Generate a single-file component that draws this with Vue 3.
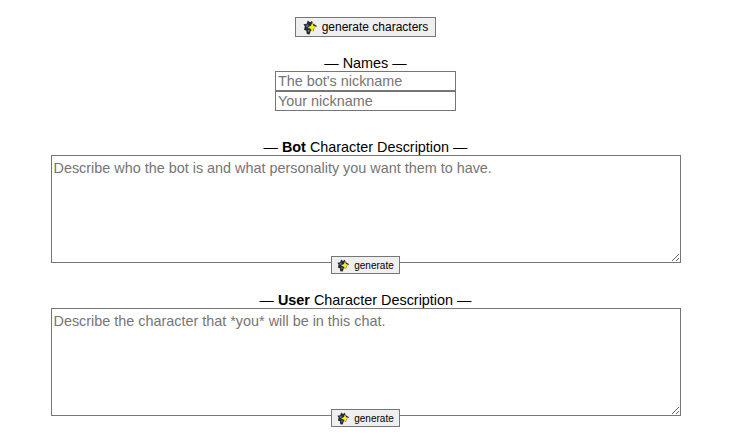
<template>
  <div class="page">
    <div class="top-row">
      <button class="gen-btn big"><svg class="wand" viewBox="0 0 16 16"><path d="M5 .500l2.500 2 2-1.500 1.500 3 4 2.500-3 2-1 3.500-2.500-1L7 15.500l-3-.5-.5-3.500-2.500-1L2 7 .500 4.500 4 4z" fill="#2a2a32"/><path d="M10 2.500l1 3.500 3.500 1.500-3 1.500L10 13 8.500 9.500 5 8l3.500-2z" fill="#f7ec1f"/><circle cx="4.500" cy="6" r="1.300" fill="#4a76c8"/><circle cx="6" cy="11.500" r="1" fill="#6f8f7a"/></svg> generate characters</button>
    </div>

    <div class="names">
      <div class="label">— Names —</div>
      <input class="name-input" placeholder="The bot's nickname" />
      <input class="name-input" placeholder="Your nickname" />
    </div>

    <div v-for="s in sections" :key="s.who" class="section">
      <div class="label">— <b>{{ s.who }}</b> Character Description —</div>
      <textarea class="desc" :placeholder="s.placeholder"></textarea>
      <div class="btn-row">
        <button class="gen-btn small"><svg class="wand" viewBox="0 0 16 16"><path d="M5 .500l2.500 2 2-1.500 1.500 3 4 2.500-3 2-1 3.500-2.500-1L7 15.500l-3-.5-.5-3.500-2.500-1L2 7 .500 4.500 4 4z" fill="#2a2a32"/><path d="M10 2.500l1 3.500 3.500 1.500-3 1.500L10 13 8.500 9.500 5 8l3.500-2z" fill="#f7ec1f"/><circle cx="4.500" cy="6" r="1.300" fill="#4a76c8"/><circle cx="6" cy="11.500" r="1" fill="#6f8f7a"/></svg> generate</button>
      </div>
    </div>
  </div>
</template>

<script setup>
const sections = [
  {
    who: "Bot",
    placeholder:
      "Describe who the bot is and what personality you want them to have.",
  },
  {
    who: "User",
    placeholder: "Describe the character that *you* will be in this chat.",
  },
];
</script>

<style>
html,
body {
  margin: 0;
  background: #fff;
}
</style>

<style scoped>
.page {
  width: 731px;
  height: 443px;
  overflow: hidden;
  font-family: "Liberation Sans", Arial, sans-serif;
  font-size: 14.4px;
  color: #000;
  text-align: center;
  padding-top: 17px;
  box-sizing: border-box;
}

.top-row {
  height: 20px;
}

.gen-btn {
  display: inline-flex;
  align-items: center;
  justify-content: center;
  box-sizing: border-box;
  border: 1px solid #767676;
  border-radius: 0;
  background: #efefef;
  color: #000;
  font-family: inherit;
  padding: 0;
}

.gen-btn.big {
  width: 141px;
  height: 20px;
  font-size: 12px;
  gap: 4px;
}

.gen-btn.small {
  width: 69px;
  height: 18px;
  font-size: 10px;
  gap: 4px;
}

.wand {
  flex: none;
  width: 15px;
  height: 15px;
}

.small .wand {
  width: 13px;
  height: 13px;
}

.names {
  margin-top: 18px;
  display: flex;
  flex-direction: column;
  align-items: center;
}

.label {
  line-height: 16px;
  height: 16px;
}

.name-input {
  width: 181px;
  height: 20px;
  box-sizing: border-box;
  border: 1px solid #767676;
  padding: 0 2px;
  font-family: inherit;
  font-size: 14.4px;
  outline: none;
}

.section {
  display: flex;
  flex-direction: column;
  align-items: center;
  margin-top: 28px;
}

.section + .section {
  margin-top: 18px;
}

.desc {
  display: block;
  width: 630px;
  height: 108px;
  box-sizing: border-box;
  border: 1px solid #767676;
  padding: 4px 2px 2px;
  font-family: inherit;
  font-size: 14.4px;
  outline: none;
}

.btn-row {
  margin-top: -7px;
  height: 18px;
  position: relative;
}
</style>
